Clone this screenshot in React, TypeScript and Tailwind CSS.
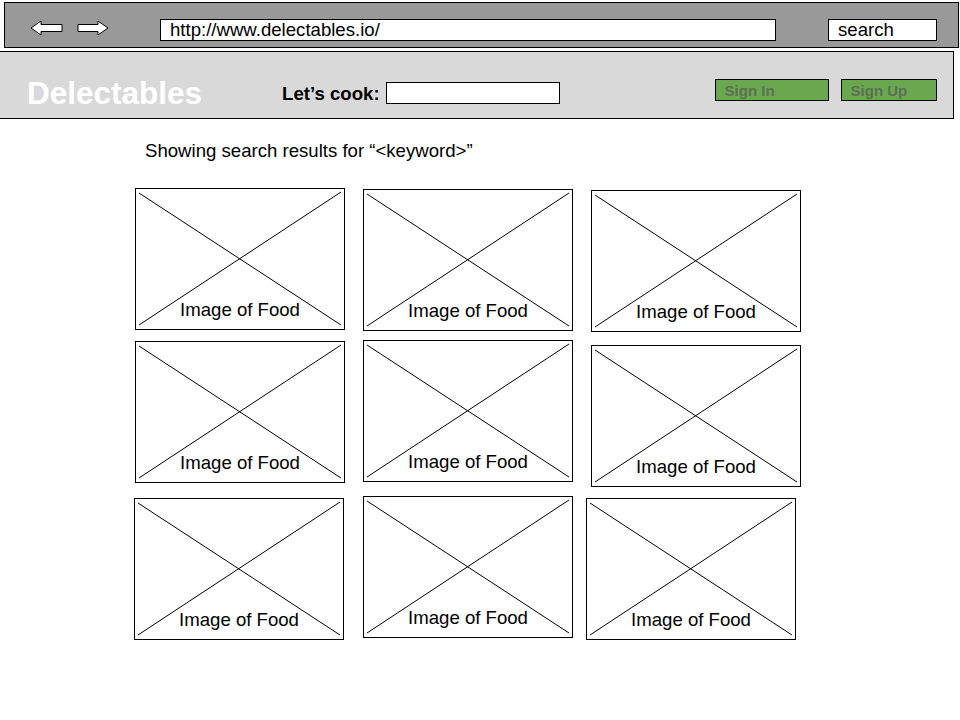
const ArrowLeft = () => (
  <svg width="34" height="16" viewBox="0 0 34 16">
    <path d="M1 8 L11 1 L11 4.5 L32 4.5 L32 11.5 L11 11.5 L11 15 Z" fill="#fff" stroke="#000" strokeWidth="1" />
  </svg>
);

const ArrowRight = () => (
  <svg width="32" height="16" viewBox="0 0 32 16">
    <path d="M31 8 L21 1 L21 4.5 L1 4.5 L1 11.5 L21 11.5 L21 15 Z" fill="#fff" stroke="#000" strokeWidth="1" />
  </svg>
);

const FoodCard = ({ pos }: { pos: string }) => {
  return (
    <div className={`relative flex h-[142px] w-[210px] shrink-0 items-end justify-center border border-black bg-white pb-[5px] ${pos}`}>
      <svg className="absolute inset-0 h-full w-full" viewBox="0 0 208 140" preserveAspectRatio="none">
        <line x1="3" y1="4" x2="205" y2="136" stroke="#000" strokeWidth="1" />
        <line x1="205" y1="3" x2="3" y2="136" stroke="#000" strokeWidth="1" />
      </svg>
      <span className="relative text-[18.6px] text-black">Image of Food</span>
    </div>
  );
};

const rows = [
  { h: "h-[152px]", cards: ["mt-0 ml-0", "mt-[1px] ml-[18px]", "mt-[2px] ml-[18px]"] },
  { h: "h-[156px]", cards: ["mt-[1px] ml-0", "mt-0 ml-[18px]", "mt-[5px] ml-[18px]"] },
  { h: "h-[150px]", cards: ["mt-[2px] -ml-[1px]", "mt-0 ml-[19px]", "mt-[2px] ml-[13px]"] },
];

export default function App() {
  return (
    <div className="h-[720px] w-[960px] overflow-hidden bg-white font-['Liberation_Sans',Arial,sans-serif] pt-[2px]">
      {/* browser chrome */}
      <div className="ml-[4px] flex h-[46px] w-[955px] items-start border border-black bg-[#999999] pt-[16px]">
        <div className="ml-[25px] mt-[1px]"><ArrowLeft /></div>
        <div className="ml-[13px] mt-[1px]"><ArrowRight /></div>
        <div className="ml-[51px] flex h-[22px] w-[616px] items-center border border-black bg-white pl-[9px] text-[18.6px] leading-none text-black">
          http://www.delectables.io/
        </div>
        <div className="ml-[52px] flex h-[22px] w-[109px] items-center border border-black bg-white pl-[9px] text-[18.6px] leading-none text-black">
          search
        </div>
      </div>

      {/* site header */}
      <div className="mt-[3px] flex h-[68px] w-[954px] items-start border-y border-r border-black bg-[#d9d9d9]">
        <div className="ml-[27px] mt-[26px] text-[31.5px] font-bold leading-none text-white">Delectables</div>
        <div className="ml-[80px] mt-[33px] text-[18.6px] font-bold leading-none text-black">Let’s cook:</div>
        <div className="ml-[6px] mt-[30px] h-[22px] w-[174px] border border-black bg-white" />
        <div className="ml-[155px] mt-[27px] flex h-[22px] w-[114px] items-center border border-black bg-[#6aa84f] pl-[9px] text-[15px] font-bold leading-none text-[#5d6f55]">
          Sign In
        </div>
        <div className="ml-[12px] mt-[27px] flex h-[22px] w-[96px] items-center border border-black bg-[#6aa84f] pl-[9px] text-[15px] font-bold leading-none text-[#5d6f55]">
          Sign Up
        </div>
      </div>

      <div className="ml-[145px] mt-[23px] text-[18.6px] leading-none text-black">
        Showing search results for “&lt;keyword&gt;”
      </div>

      <div className="ml-[135px] mt-[27px] flex flex-col">
        {rows.map((row, i) => (
          <div key={i} className={`flex items-start ${row.h}`}>
            {row.cards.map((pos, j) => (
              <FoodCard key={j} pos={pos} />
            ))}
          </div>
        ))}
      </div>
    </div>
  );
}
